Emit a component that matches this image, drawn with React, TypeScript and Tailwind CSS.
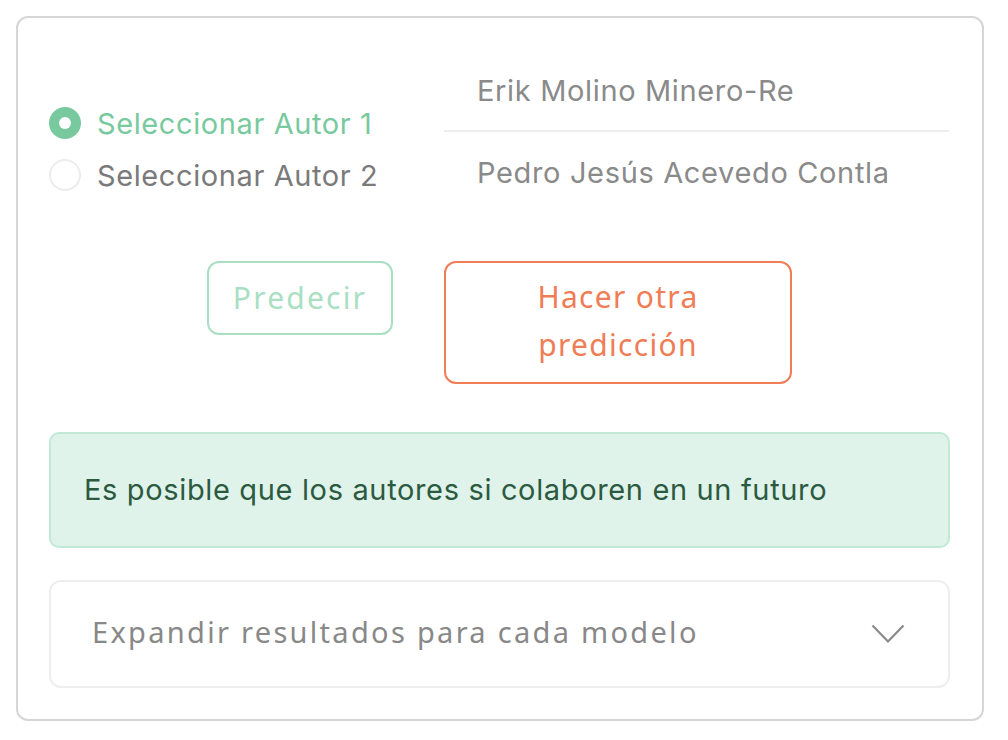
import React from "react";

export default function App() {
  return (
    <div className="w-[1008px] h-[740px] bg-white pt-[16px] pl-[16px]" style={{ fontFamily: "Inter, 'Liberation Sans', sans-serif" }}>
      <div className="w-[968px] h-[705px] border-2 border-[#d6d6d6] rounded-[12px] px-[31px] pt-[38px]">
        <div className="flex h-[146px]">
          <div className="w-[395px] pt-[51px] flex flex-col gap-[20px]">
            <label className="flex items-center h-[32px]">
              <span className="w-[32px] h-[32px] shrink-0 rounded-full bg-[#79c99e] flex items-center justify-center">
                <span className="w-[12px] h-[12px] rounded-full bg-white" />
              </span>
              <span className="ml-[16px] text-[29px] tracking-[0.6px] text-[#79c99e] leading-none whitespace-nowrap">Seleccionar Autor 1</span>
            </label>
            <label className="flex items-center h-[32px]">
              <span className="w-[32px] h-[32px] shrink-0 rounded-full border-2 border-[#ececec] bg-white" />
              <span className="ml-[16px] text-[29px] tracking-[0.6px] text-[#7a7a7a] leading-none whitespace-nowrap">Seleccionar Autor 2</span>
            </label>
          </div>
          <div className="w-[505px] flex flex-col">
            <div className="h-[76px] border-b-2 border-[#ededed] pl-[33px] pt-[20px] text-[29px] tracking-[0.65px] text-[#8a8a8a] leading-none">Erik Molino Minero-Re</div>
            <div className="pl-[33px] pt-[26px] text-[29px] tracking-[0.65px] text-[#8a8a8a] leading-none">Pedro Jesús Acevedo Contla</div>
          </div>
        </div>

        <div className="flex items-start mt-[59px]" style={{ fontFamily: "'Noto Sans', sans-serif" }}>
          <div className="w-[395px] flex justify-end pr-[51px]">
            <button className="w-[186px] h-[74px] border-2 border-[#a9e0c4] rounded-[12px] text-[30px] tracking-[2.2px] text-[#a9dfc3] leading-none pb-[1px]">Predecir</button>
          </div>
          <button className="w-[348px] h-[123px] border-2 border-[#ef7d55] rounded-[12px] text-[30px] tracking-[1.3px] text-[#ef7d55] leading-[48px] pb-[4px]">
            Hacer otra<br />predicción
          </button>
        </div>

        <div className="mt-[48px] h-[116px] w-[901px] bg-[#dff3ea] border-2 border-[#c0e9d6] rounded-[10px] flex items-center pl-[33px] text-[29px] tracking-[0.65px] text-[#2c5a41] whitespace-nowrap">
          Es posible que los autores si colaboren en un futuro
        </div>

        <div className="mt-[32px] h-[108px] w-[901px] border-2 border-[#eeeeee] rounded-[12px] flex items-center justify-between pl-[41px] pr-[43px]" style={{ fontFamily: "'Noto Sans', sans-serif" }}>
          <span className="text-[29px] tracking-[2.3px] text-[#888888] whitespace-nowrap pb-[4px]">Expandir resultados para cada modelo</span>
          <svg width="34" height="20" viewBox="0 0 34 20" fill="none">
            <path d="M1.5 1.5 L17 17.5 L32.5 1.5" stroke="#8a8a8a" strokeWidth="2.2" />
          </svg>
        </div>
      </div>
    </div>
  );
}
